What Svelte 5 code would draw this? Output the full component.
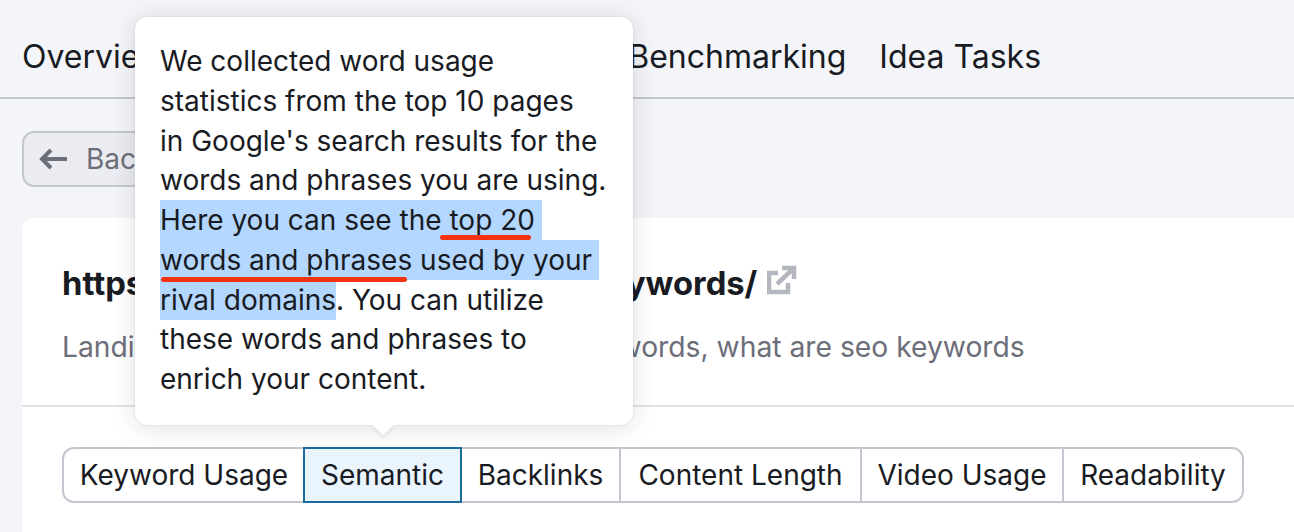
<script lang="ts">
  const navItems = ["Overview", "Optimization Ideas", "Top 10 Benchmarking", "Idea Tasks"];
  const tabs = ["Keyword Usage", "Semantic", "Backlinks", "Content Length", "Video Usage", "Readability"];
  let activeTab = "Semantic";
</script>

<div class="page">
  <nav class="nav">
    {#each navItems as item}
      <span class="nav-item">{item}</span>
    {/each}
  </nav>

  <div class="content">
    <button class="back">
      <svg width="30" height="24" viewBox="0 0 30 24" fill="none" stroke="#6c6e79" stroke-width="4">
        <path d="M29 12H4" />
        <path d="M13 3 4 12l9 9" />
      </svg>
      <span>Back</span>
    </button>

    <section class="card">
      <header class="card-head">
        <h2 class="title">
          <span>https://www.semrush.com/blog/keywords/</span>
          <svg width="30" height="30" viewBox="0 0 30 30" fill="none" stroke="#b5b7c0" stroke-width="4.500">
            <path d="M11 8H2v19h19v-9" />
            <path d="M10 19 26 4" />
            <path d="M15 3h12v11" />
          </svg>
        </h2>
        <p class="subtitle">Landing page for: best seo keywords, keywords, what are seo keywords</p>
      </header>

      <div class="tabs">
        {#each tabs as tab}
          <button class="tab" class:active={tab === activeTab} on:click={() => (activeTab = tab)}>{tab}</button>
        {/each}
      </div>
    </section>
  </div>

  <div class="tooltip">
    We collected word usage statistics from the top 10 pages<br />
    in Google's search results for the words and phrases you are using.
    <span class="sel trail">Here you can see the <span class="mark">top 20</span></span><br />
    <span class="sel trail"><span class="mark long">words and phrases</span> used by your</span><br />
    <span class="sel">rival domains</span>. You can utilize these words and phrases to enrich your content.
  </div>
</div>

<style>
  :global(body) {
    margin: 0;
    background: #f4f5f9;
  }

  .page {
    position: relative;
    width: 1294px;
    height: 532px;
    overflow: hidden;
    background: #f4f5f9;
    color: #191b23;
    font-family: Inter, "Liberation Sans", sans-serif;
  }

  .nav {
    display: flex;
    gap: 33px;
    height: 99px;
    box-sizing: border-box;
    padding: 35px 22px 0;
    border-bottom: 2px solid #c4c7cf;
    font-size: 32px;
    line-height: 44px;
    white-space: nowrap;
  }

  .nav-item:nth-child(2) {
    margin-right: 8px;
  }

  .content {
    padding: 32px 0 0 22px;
  }

  .back {
    display: flex;
    align-items: center;
    gap: 18px;
    width: 180px;
    height: 56px;
    box-sizing: border-box;
    padding: 0 14px;
    background: #ebecf1;
    border: 2px solid #c4c7cf;
    border-radius: 12px;
    color: #6c6e79;
    font: inherit;
    font-size: 28px;
  }

  .card {
    width: 1300px;
    height: 340px;
    margin-top: 31px;
    background: #fff;
    border-radius: 12px 0 0 0;
  }

  .card-head {
    height: 189px;
    box-sizing: border-box;
    padding: 43px 40px 0;
    border-bottom: 2px solid #e0e1e9;
  }

  .title {
    display: flex;
    align-items: center;
    gap: 10px;
    margin: 0;
    font-size: 32.75px;
    line-height: 44px;
    font-weight: 700;
  }

  .title svg {
    margin-top: -6px;
  }

  .subtitle {
    margin: 22px 0 0;
    color: #6c6e79;
    font-size: 28.25px;
    line-height: 40px;
    white-space: nowrap;
  }

  .tabs {
    display: inline-grid;
    grid-template-columns: 239px 159px 157px 241px 202px 180px;
    margin: 40px 0 0 40px;
    border: 2px solid #c4c7cf;
    border-radius: 12px;
    background: #fff;
  }

  .tab {
    height: 52px;
    padding: 0;
    background: none;
    border: none;
    border-left: 2px solid #c4c7cf;
    color: #191b23;
    font: inherit;
    font-size: 28px;
    white-space: nowrap;
  }

  .tab:first-child {
    border-left: none;
    padding-left: 1px;
  }

  .tab.active {
    margin: -2px 0;
    height: 56px;
    background: #e9f4fd;
    border: 2px solid #1a6c9b;
  }

  .tab.active + .tab {
    border-left: none;
  }

  .tooltip {
    position: absolute;
    left: 135px;
    top: 17px;
    width: 498px;
    height: 408px;
    box-sizing: border-box;
    padding: 25px 24px 0 25px;
    background: #fff;
    border-radius: 12px;
    box-shadow: 0 2px 24px rgba(25, 27, 35, 0.14), 0 0 2px rgba(25, 27, 35, 0.16);
    font-size: 28px;
    line-height: 39.75px;
  }

  .tooltip::after {
    content: "";
    position: absolute;
    left: 238px;
    bottom: -10px;
    width: 20px;
    height: 20px;
    background: #fff;
    transform: rotate(45deg) scale(0.75);
    box-shadow: 3px 3px 5px rgba(25, 27, 35, 0.08);
  }

  .sel {
    padding: 3px 0;
    background: #b3d7fe;
  }

  .sel.trail {
    padding-right: 7px;
  }

  .mark {
    position: relative;
  }

  .mark::after {
    content: "";
    position: absolute;
    left: -9px;
    right: 4px;
    bottom: -3px;
    height: 5px;
    border-radius: 3px;
    background: #f5320f;
  }

  .mark.long::after {
    left: 1px;
    right: 5px;
    bottom: -5px;
  }
</style>
